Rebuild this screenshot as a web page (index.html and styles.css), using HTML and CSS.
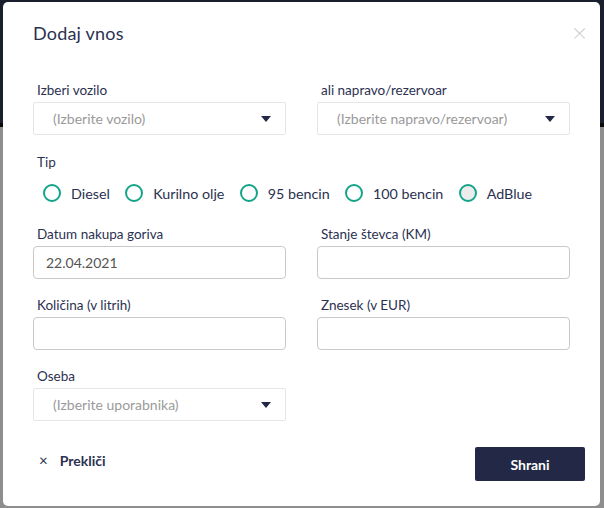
FILE: index.html
```html
<!DOCTYPE html>
<html lang="sl">
<head>
<meta charset="utf-8">
<title>Dodaj vnos</title>
<link rel="stylesheet" href="styles.css">
</head>
<body>
<div class="page">
  <div class="page-header"></div>
  <div class="page-rule"></div>
  <div class="page-body"></div>
</div>

<div class="modal">
  <div class="modal-head">
    <h2 class="modal-title">Dodaj vnos</h2>
    <span class="modal-close">&times;</span>
  </div>

  <div class="form">
    <div class="row row-first">
      <div class="field">
        <label class="label">Izberi vozilo</label>
        <div class="select"><span class="placeholder">(Izberite vozilo)</span><span class="caret"></span></div>
      </div>
      <div class="field">
        <label class="label">ali napravo/rezervoar</label>
        <div class="select"><span class="placeholder">(Izberite napravo/rezervoar)</span><span class="caret"></span></div>
      </div>
    </div>

    <div class="type">
      <label class="label">Tip</label>
      <div class="radios">
        <span class="radio"><span class="dot"></span>Diesel</span>
        <span class="radio"><span class="dot"></span>Kurilno olje</span>
        <span class="radio"><span class="dot"></span>95 bencin</span>
        <span class="radio"><span class="dot"></span>100 bencin</span>
        <span class="radio"><span class="dot dot-hover"></span>AdBlue</span>
      </div>
    </div>

    <div class="row">
      <div class="field">
        <label class="label">Datum nakupa goriva</label>
        <div class="input">22.04.2021</div>
      </div>
      <div class="field">
        <label class="label">Stanje števca (KM)</label>
        <div class="input"></div>
      </div>
    </div>

    <div class="row">
      <div class="field">
        <label class="label">Količina (v litrih)</label>
        <div class="input"></div>
      </div>
      <div class="field">
        <label class="label">Znesek (v EUR)</label>
        <div class="input"></div>
      </div>
    </div>

    <div class="row">
      <div class="field">
        <label class="label">Oseba</label>
        <div class="select"><span class="placeholder">(Izberite uporabnika)</span><span class="caret"></span></div>
      </div>
      <div class="field"></div>
    </div>
  </div>

  <div class="modal-foot">
    <span class="cancel"><span class="cancel-x">&times;</span>Prekliči</span>
    <span class="save">Shrani</span>
  </div>
</div>
</body>
</html>
```

FILE: styles.css
```css
* { box-sizing: border-box; }
html, body { margin: 0; padding: 0; }
body {
  width: 604px;
  height: 508px;
  overflow: hidden;
  font-family: Lato, "Noto Sans", sans-serif;
  color: #2b3150;
  background: #8c8c8c;
}
.page { display: flex; flex-direction: column; height: 508px; }
.page-header { height: 123px; background: #1a1f2e; }
.page-rule { height: 4px; background: #0a0a0a; }
.page-body { flex: 1; background: #8e8e8e; }

.modal {
  position: fixed;
  left: 3px;
  top: 2px;
  width: 597px;
  height: 504px;
  background: #fff;
  border-radius: 5px;
  padding: 0 15px 0 30px;
  display: flex;
  flex-direction: column;
}
.modal-head {
  display: flex;
  justify-content: space-between;
  align-items: flex-start;
  height: 78px;
}
.modal-title {
  margin: 20px 0 0;
  font-size: 18px;
  font-weight: 400;
  color: #2b3150;
  letter-spacing: 0.2px;
}
.modal-close {
  margin: 17px -2px 0 0;
  font-size: 26px;
  line-height: 26px;
  color: #cccccc;
  font-weight: 300;
}

.form { padding-right: 15px; display: flex; flex-direction: column; }
.row { display: grid; grid-template-columns: 253px 253px; column-gap: 31px; margin-bottom: 16px; }
.row-first { margin-bottom: 17px; }
.field { display: flex; flex-direction: column; }
.label {
  display: block;
  font-size: 13.5px;
  line-height: 18px;
  padding-top: 1px;
  padding-left: 4px;
  margin-bottom: 3px;
  color: #2b3150;
}
.select {
  height: 33px;
  border: 1px solid #e6e6e6;
  border-radius: 2px;
  display: flex;
  align-items: center;
  justify-content: space-between;
  padding: 0 14px 0 19px;
}
.placeholder { font-size: 14px; color: #9a9a9a; }
.caret {
  width: 0; height: 0;
  border-left: 5px solid transparent;
  border-right: 5px solid transparent;
  border-top: 6px solid #232944;
}
.input {
  height: 33px;
  border: 1px solid #c9c9c9;
  border-radius: 4px;
  padding: 0 12px;
  font-size: 14px;
  line-height: 31px;
  color: #555;
}

.type { margin-bottom: 22px; }
.type .label { margin-bottom: 13px; }
.radios { display: flex; padding-left: 10px; height: 18px; align-items: center; }
.radio {
  display: inline-flex;
  align-items: center;
  font-size: 14.3px;
  color: #2b3150;
  margin-right: 15.3px;
}
.dot {
  width: 18px; height: 18px;
  border: 2.6px solid #14a588;
  border-radius: 50%;
  margin-right: 10px;
  background: #fff;
}
.dot-hover { background: #ececec; }

.modal-foot {
  margin-top: auto;
  margin-bottom: 25px;
  display: flex;
  justify-content: space-between;
  align-items: center;
}
.cancel {
  display: inline-flex;
  align-items: center;
  font-size: 14px;
  font-weight: 700;
  color: #2b3150;
  padding-left: 6px;
  padding-bottom: 8px;
}
.cancel-x { font-weight: 400; font-size: 15px; margin-right: 12px; color: #2b3150; }
.save {
  width: 110px;
  height: 34px;
  background: #222845;
  color: #fff;
  font-weight: 700;
  font-size: 14px;
  border-radius: 2px;
  display: flex;
  align-items: center;
  justify-content: center;
}
```
